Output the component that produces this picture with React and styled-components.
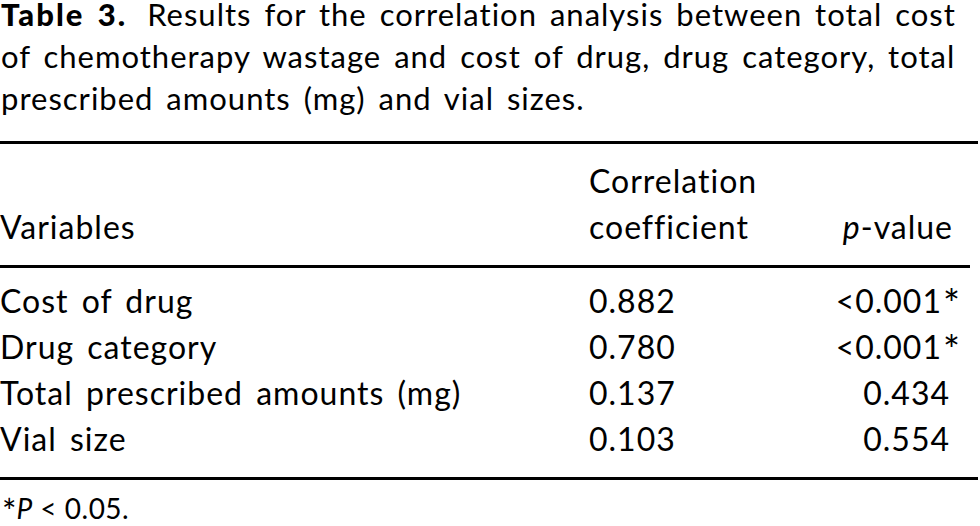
import React from "react";
import styled, { createGlobalStyle } from "styled-components";

const Global = createGlobalStyle`
  html, body { margin: 0; padding: 0; background: #fff; }
  body { font-family: Lato, "Open Sans", sans-serif; color: #000; }
`;

const Page = styled.div`
  width: 980px;
  height: 526px;
  overflow: hidden;
  box-sizing: border-box;
`;

const Caption = styled.p`
  margin: -7px 0 0 1px;
  font-size: 31px;
  line-height: 42px;
  letter-spacing: 1px;
  word-spacing: 4px;
  width: 979px;
`;

const Label = styled.strong`
  font-weight: 900;
  letter-spacing: 2px;
  margin-right: 20px;
`;

const Table = styled.div`
  margin-top: 22px;
  width: 978px;
  border-top: 3px solid #000;
  border-bottom: 3px solid #000;
`;

const Row = styled.div`
  display: grid;
  grid-template-columns: 589px 1fr 150px;
  align-items: end;
  font-size: 32px;
  line-height: 46px;
  letter-spacing: 1px;
  word-spacing: 4px;
  width: 970px;
`;

const HeadRow = styled(Row)`
  padding-top: 14px;
  padding-bottom: 15px;
  border-bottom: 3px solid #000;
  margin-bottom: 10px;
`;

const BodyRows = styled.div`
  padding-bottom: 15px;
`;

const Cell = styled.div`
  white-space: nowrap;
`;

const NumCell = styled.div`
  white-space: nowrap;
  text-align: right;
  padding-right: ${(p) => p.$pad}px;
`;

const Star = styled.span`
  display: inline-block;
  font-size: ${(p) => p.$size}px;
  line-height: 0;
  vertical-align: ${(p) => p.$drop}px;
  margin-left: 1px;
  letter-spacing: 0;
`;

const Italic = styled.i`
  font-style: italic;
`;

const Footnote = styled.p`
  margin: 12px 0 0 1px;
  font-size: 28px;
  line-height: 32px;
  letter-spacing: 0.5px;
`;

const rows = [
  ["Cost of drug", "0.882", "<0.001", true],
  ["Drug category", "0.780", "<0.001", true],
  ["Total prescribed amounts (mg)", "0.137", "0.434", false],
  ["Vial size", "0.103", "0.554", false],
];

export default function App() {
  return (
    <Page>
      <Global />
      <Caption>
        <Label>Table 3.</Label>Results for the correlation analysis between total cost of
        chemotherapy wastage and cost of drug, drug category, total prescribed amounts (mg) and
        vial sizes.
      </Caption>
      <Table>
        <HeadRow>
          <Cell>Variables</Cell>
          <Cell>
            Correlation
            <br />
            coefficient
          </Cell>
          <NumCell $pad={17}>
            <Italic>p</Italic>-value
          </NumCell>
        </HeadRow>
        <BodyRows>
          {rows.map(([name, coef, p, sig]) => (
            <Row key={name}>
              <Cell>{name}</Cell>
              <Cell>{coef}</Cell>
              <NumCell $pad={sig ? 10 : 20}>
                {p}
                {sig && (
                  <Star $size={40} $drop={-6}>
                    *
                  </Star>
                )}
              </NumCell>
            </Row>
          ))}
        </BodyRows>
      </Table>
      <Footnote>
        <Star $size={34} $drop={-5}>
          *
        </Star>
        <Italic>P</Italic> &lt; 0.05.
      </Footnote>
    </Page>
  );
}
